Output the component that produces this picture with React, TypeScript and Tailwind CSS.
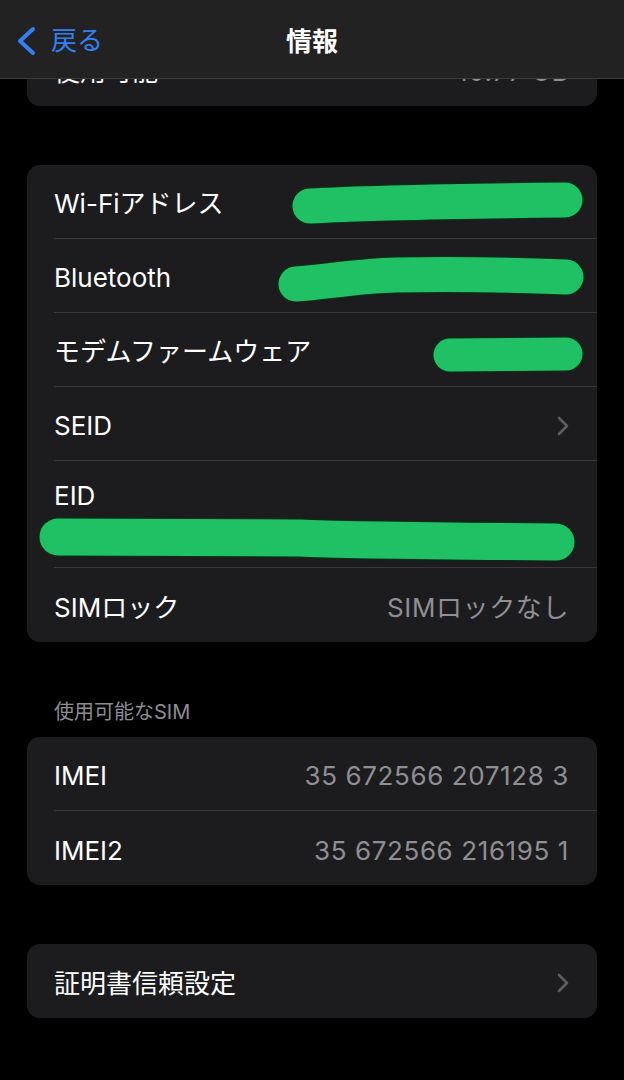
import { ReactNode } from "react";

const FONT = "font-['Inter','Noto_Sans_CJK_JP',sans-serif]";

function Chevron() {
	return (
		<svg width="12" height="20" viewBox="0 0 12 20" className="shrink-0" aria-hidden="true">
			<path d="M2 2l8 8-8 8" fill="none" stroke="#5c5c61" strokeWidth="2.6" strokeLinecap="round" strokeLinejoin="round" />
		</svg>
	);
}

// green marker strokes that hide the private values
function Scribble({ width, height, d, stroke, className }: { width: number; height: number; d: string; stroke: number; className?: string }) {
	return (
		<svg width={width} height={height} viewBox={`0 0 ${width} ${height}`} className={className} aria-hidden="true">
			<path d={d} fill="none" stroke="#0c2a17" strokeWidth={stroke + 3} strokeLinecap="round" strokeLinejoin="round" />
			<path d={d} fill="none" stroke="#20c064" strokeWidth={stroke} strokeLinecap="round" strokeLinejoin="round" />
		</svg>
	);
}

function Row({ label, value, last, children }: { label: string; value?: string; last?: boolean; children?: ReactNode }) {
	return (
		<div className="h-[74px] pl-[27px]">
			<div className={`flex h-full items-center justify-between pr-[28px] pt-[4px] ${last ? "" : "border-b border-[#38383a]"}`}>
				<span className="text-[26px] text-white">{label}</span>
				{value && <span className="text-[26px] tracking-[0.6px] text-[#8e8e93]">{value}</span>}
				{children}
			</div>
		</div>
	);
}

function Card({ children }: { children: ReactNode }) {
	return <div className="mx-[27px] overflow-hidden rounded-[13px] bg-[#1c1c1e]">{children}</div>;
}

export default function App() {
	return (
		<div className={`relative h-[1080px] overflow-hidden bg-black ${FONT}`}>
			{/* nav bar over the scrolled content */}
			<header className="absolute inset-x-0 top-0 z-10 flex h-[79px] items-center border-b border-[#3a3a3c] bg-[#222223]">
				<div className="flex items-center gap-[14px] pl-[15px] pt-[3px]">
					<svg width="22" height="30" viewBox="0 0 22 30" aria-hidden="true">
						<path d="M18 3L5 15l13 12" fill="none" stroke="#3380f4" strokeWidth="4" strokeLinecap="round" strokeLinejoin="round" />
					</svg>
					<span className="text-[26px] text-[#3380f4]">戻る</span>
				</div>
				<h1 className="absolute left-1/2 top-[22px] -translate-x-1/2 text-[26px] font-semibold text-white">情報</h1>
			</header>

			<main className="flex flex-col pt-[32px]">
				<Card>
					<Row label="使用可能" value="10.77 GB" last />
				</Card>

				<div className="mt-[59px]">
					<Card>
						<Row label="Wi-Fiアドレス">
							<Scribble
								width={298}
								height={47}
								stroke={35}
								d="M22 25C90 21 180 20 277 19"
								className="-mr-[17px] mt-[2px]"
							/>
						</Row>
						<Row label="Bluetooth">
							<Scribble
								width={312}
								height={46}
								stroke={35}
								d="M20 28C50 26 80 20 120 19C180 18 240 19 290 21"
								className="-mr-[19px] mt-[2px]"
							/>
						</Row>
						<Row label="モデムファームウェア">
							<Scribble
								width={156}
								height={40}
								stroke={33}
								d="M20 20L136 19"
								className="-mr-[17px] mt-[6px]"
							/>
						</Row>
						<Row label="SEID">
							<Chevron />
						</Row>
						<div className="pl-[27px]">
							<div className="flex h-[107px] flex-col border-b border-[#38383a] pt-[19px]">
								<span className="text-[26px] leading-[32px] text-white">EID</span>
								<Scribble
									width={540}
									height={44}
									stroke={37}
									d="M20 20L262 21C300 23 400 24 518 25"
									className="-ml-[16px] mt-[5px]"
								/>
							</div>
						</div>
						<Row label="SIMロック" value="SIMロックなし" last />
					</Card>
				</div>

				<p className="mt-[59px] px-[54px] text-[20px] leading-[22px] text-[#8d8d92]">使用可能なSIM</p>
				<div className="mt-[14px]">
					<Card>
						<Row label="IMEI" value="35 672566 207128 3" />
						<Row label="IMEI2" value="35 672566 216195 1" last />
					</Card>
				</div>

				<div className="mt-[59px]">
					<Card>
						<Row label="証明書信頼設定" last>
							<Chevron />
						</Row>
					</Card>
				</div>
			</main>
		</div>
	);
}
